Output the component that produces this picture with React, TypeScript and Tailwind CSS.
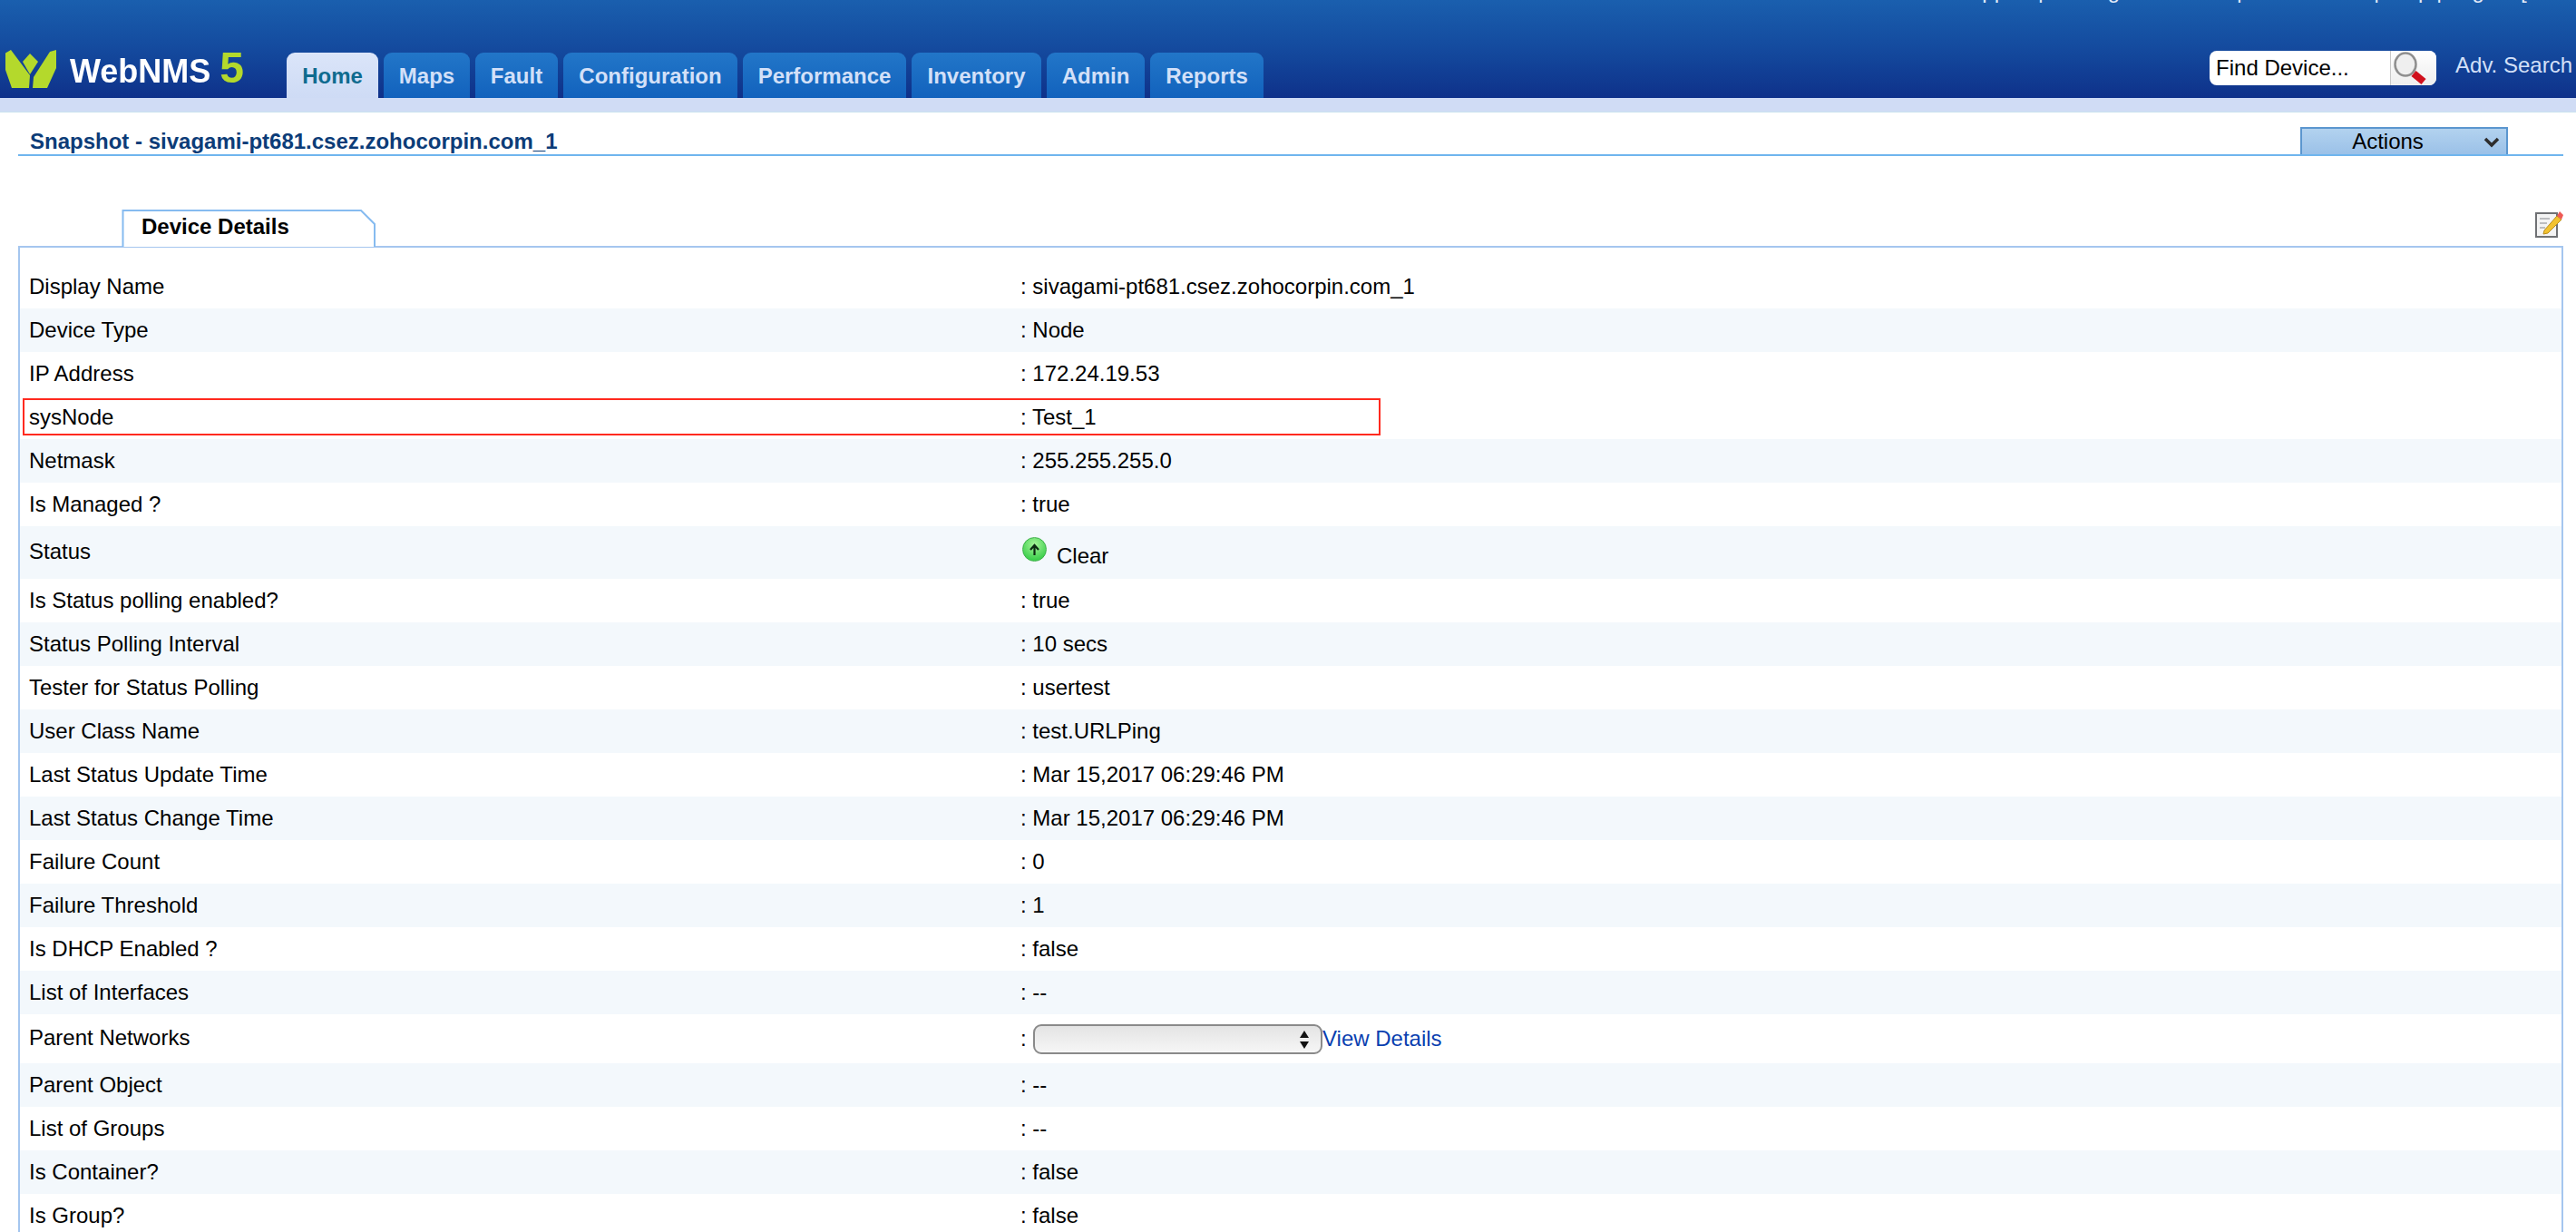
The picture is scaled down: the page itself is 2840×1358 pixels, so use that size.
import React from 'react';

const NAV_TABS = [
  { label: 'Home', width: 'w-[101px]', active: true },
  { label: 'Maps', width: 'w-[95px]' },
  { label: 'Fault', width: 'w-[91px]' },
  { label: 'Configuration', width: 'w-[192px]' },
  { label: 'Performance', width: 'w-[180px]' },
  { label: 'Inventory', width: 'w-[143px]' },
  { label: 'Admin', width: 'w-[108px]' },
  { label: 'Reports', width: 'w-[125px]' },
];

type Row = { label: string; value?: string; kind?: 'status' | 'select'; boxed?: boolean };

const ROWS: Row[] = [
  { label: 'Display Name', value: 'sivagami-pt681.csez.zohocorpin.com_1' },
  { label: 'Device Type', value: 'Node' },
  { label: 'IP Address', value: '172.24.19.53' },
  { label: 'sysNode', value: 'Test_1', boxed: true },
  { label: 'Netmask', value: '255.255.255.0' },
  { label: 'Is Managed ?', value: 'true' },
  { label: 'Status', kind: 'status' },
  { label: 'Is Status polling enabled?', value: 'true' },
  { label: 'Status Polling Interval', value: '10 secs' },
  { label: 'Tester for Status Polling', value: 'usertest' },
  { label: 'User Class Name', value: 'test.URLPing' },
  { label: 'Last Status Update Time', value: 'Mar 15,2017 06:29:46 PM' },
  { label: 'Last Status Change Time', value: 'Mar 15,2017 06:29:46 PM' },
  { label: 'Failure Count', value: '0' },
  { label: 'Failure Threshold', value: '1' },
  { label: 'Is DHCP Enabled ?', value: 'false' },
  { label: 'List of Interfaces', value: '--' },
  { label: 'Parent Networks', kind: 'select' },
  { label: 'Parent Object', value: '--' },
  { label: 'List of Groups', value: '--' },
  { label: 'Is Container?', value: 'false' },
  { label: 'Is Group?', value: 'false' },
];

// stripes skip the sysNode row, so the pattern flips after it
const isStriped = (i: number) => (i < 3 ? i === 1 : i > 3 && i % 2 === 0);

const Logo = () => (
  <div className="flex items-start w-[316px] h-[53px] pl-[6px]">
    <svg width="56" height="43" viewBox="0 0 56 43" className="shrink-0">
      <path d="M0 3.5 L6 0 L27 28 L26 42 L7 42 L0 22 Z" fill="#b4d92c" />
      <path d="M56 0 L49 2 L31 30 L30 42 L46 42 L56 20 Z" fill="#b4d92c" />
      <path d="M27 4 L36 13 L27 27 L19 13 Z" fill="#b4d92c" />
    </svg>
    <span className="ml-[15px] mt-[6px] text-[36px] font-bold leading-none text-white blur-[0.5px]">WebNMS</span>
    <span className="ml-[10px] -mt-[4px] text-[48px] font-bold leading-none text-[#b4d92c] blur-[0.4px]">5</span>
  </div>
);

const SearchIcon = () => (
  <svg width="44" height="38" viewBox="0 0 44 38">
    <ellipse cx="16" cy="15" rx="11.5" ry="12.5" fill="#efefef" stroke="#8f8f8f" strokeWidth="2.5" />
    <path d="M25 25 L36 34" stroke="#d0101c" strokeWidth="8" />
  </svg>
);

const NoteIcon = () => (
  <svg width="31" height="30" viewBox="0 0 31 30">
    <rect x="1" y="3" width="23" height="26" fill="#f4f4f4" stroke="#6f7174" strokeWidth="2" />
    <path d="M5 9h11M5 14h8M5 19h6" stroke="#a9abae" strokeWidth="1.5" />
    <path d="M10 22 L24 6 L29 10 L14 25 L9 26 Z" fill="#f2c230" stroke="#b98c1a" strokeWidth="1" />
    <path d="M24 6 L27 1 L31 5 L29 10 Z" fill="#ee5a55" />
  </svg>
);

const ClearIcon = () => (
  <span className="flex w-[27px] h-[27px] items-center justify-center rounded-full border border-[#3fb04a] bg-[radial-gradient(circle_at_50%_30%,#a8f59a,#3fd04e_75%)]">
    <svg width="13" height="14" viewBox="0 0 13 14">
      <path d="M6.5 13V3M2 7L6.5 2l4.5 5" fill="none" stroke="#0c2a12" strokeWidth="2.2" />
    </svg>
  </span>
);

const ValueCell = ({ row }: { row: Row }) => {
  if (row.kind === 'status') {
    return (
      <div className="flex items-start pt-[12px] pl-[2px] h-full">
        <ClearIcon />
        <span className="ml-[11px] mt-[7px] leading-[28px]">Clear</span>
      </div>
    );
  }
  if (row.kind === 'select') {
    return (
      <div className="flex items-center">
        <span className="w-[14px]">:</span>
        <div className="relative w-[319px] h-[33px] rounded-[9px] border-2 border-[#8a8a8a] bg-gradient-to-b from-[#e4e4e4] to-[#f6f6f6]">
          <svg width="12" height="22" viewBox="0 0 12 22" className="absolute right-[12px] top-[4px]">
            <path d="M6 1 L11 9 H1 Z M6 21 L1 13 H11 Z" fill="#111" />
          </svg>
        </div>
        <span className="text-[#0a3fb0] -mt-[1px]">View Details</span>
      </div>
    );
  }
  return <span className="whitespace-pre">: {row.value}</span>;
};

export default function App() {
  return (
    <div className="w-[2840px] h-[1358px] overflow-hidden bg-white font-['Liberation_Sans',Arial,sans-serif] text-[24px] text-black">
      <header className="relative h-[108px] overflow-hidden bg-gradient-to-b from-[#1a5fae] via-[#144a9e] via-50% to-[#0f318a] flex items-end">
        {/* top links, page was scrolled so only the descenders show */}
        <div className="absolute top-[-24px] left-[2156px] leading-[28px] text-[#e4ecfb] whitespace-pre">
          Support | Getting Started<span className="ml-[38px]"> | </span>Contact Us<span className="ml-[13px]"> | </span>Help | Logout [ root ]
        </div>
        <Logo />
        <nav className="flex gap-[6px] items-end">
          {NAV_TABS.map((tab) => (
            <div
              key={tab.label}
              className={`${tab.width} h-[50px] rounded-t-[9px] flex items-center justify-center pt-[2px] text-[24px] font-bold ${
                tab.active
                  ? 'bg-gradient-to-b from-[#dbe5f9] to-[#cedbf5] text-[#0f6b8f]'
                  : 'bg-gradient-to-b from-[#2276c8] to-[#1262bd] text-[#d3e0f8]'
              }`}
            >
              {tab.label}
            </div>
          ))}
        </nav>
        <div className="ml-auto flex items-center self-start mt-[56px] pr-[4px]">
          <div className="flex w-[250px] h-[38px] rounded-[8px] overflow-hidden bg-white">
            <div className="w-[200px] pl-[7px] leading-[38px] border-r border-[#c8c8c8]">Find Device...</div>
            <div className="flex-1 bg-gradient-to-b from-[#ffffff] to-[#eeeeee]">
              <SearchIcon />
            </div>
          </div>
          <span className="ml-[21px] -mt-[6px] text-[#d3e0f8] whitespace-nowrap">Adv. Search</span>
        </div>
      </header>
      <div className="h-[16px] bg-[#d0dcf5] border-b-[1px] border-[#c9e2ee]" />

      <div className="mx-[20px] mr-[14px] mt-[16px] h-[32px] flex items-end border-b-2 border-[#6fb5ee]">
        <div className="pl-[13px] pt-[1px] text-[24px] font-bold leading-[28px] text-[#0c3c78] self-center">
          Snapshot - sivagami-pt681.csez.zohocorpin.com_1
        </div>
        <div className="ml-auto mr-[61px] relative w-[229px] h-[30px] border-2 border-b-0 border-[#5b96cf] bg-gradient-to-b from-[#b2d2ef] to-[#9bc1e8] text-center leading-[28px] pr-[36px]">
          Actions
          <svg width="18" height="12" viewBox="0 0 18 12" className="absolute right-[7px] top-[9px]">
            <path d="M2 2 L9 9 L16 2" fill="none" stroke="#2d2d2d" strokeWidth="3.5" />
          </svg>
        </div>
      </div>

      <div className="ml-[20px] mr-[14px] mt-[59px] relative">
        <div className="h-[40px] flex items-end justify-end pb-[9px]">
          <NoteIcon />
        </div>
        <div className="absolute left-[114px] top-0 z-10 w-[280px] h-[41px]">
          <svg width="280" height="41" className="absolute inset-0">
            <path d="M1.5 41 V1 H264 L279 16 V41" fill="#fff" stroke="#86bbf0" strokeWidth="2" />
          </svg>
          <span className="absolute left-[22px] top-[5px] font-bold leading-[28px]">Device Details</span>
        </div>
        <div className="border-2 border-b-0 border-[#a5c6ef] h-[1100px] pt-[19px]">
          {ROWS.map((row, i) => (
            <div
              key={row.label}
              className={`relative flex items-center ${
                row.kind === 'status' ? 'h-[58px]' : row.kind === 'select' ? 'h-[54px]' : 'h-[48px]'
              } ${isStriped(i) ? 'bg-[#f3f8fc]' : 'bg-white'}`}
            >
              <div className={`w-[1103px] pl-[10px] ${row.kind ? 'pb-[2px]' : ''}`}>{row.label}</div>
              <div className="h-full flex items-center">
                <ValueCell row={row} />
              </div>
              {row.boxed && (
                <div className="absolute left-[3px] top-[3px] w-[1497px] h-[41px] border-2 border-[#ff2a1f]" />
              )}
            </div>
          ))}
        </div>
      </div>
    </div>
  );
}
